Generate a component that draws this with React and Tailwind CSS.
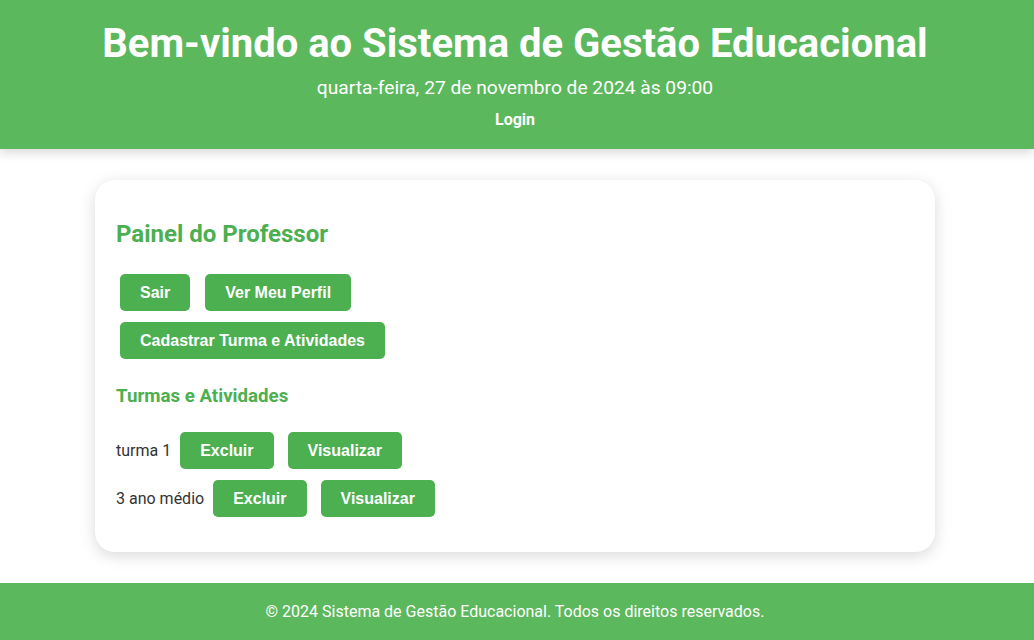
export default function App() {
  const turmas = ["turma 1", "3 ano médio"];
  const btn =
    "bg-[#4caf50] text-white font-bold text-[16px] leading-[17px] px-[20px] py-[10px] rounded-[5px] font-[family-name:Liberation_Sans,Arial,sans-serif]";

  return (
    <div className="min-h-[640px] bg-white font-['Roboto',sans-serif] flex flex-col">
      {/* Header */}
      <header className="bg-[#5cb85c] text-white text-center h-[149px] pt-[20px] pr-[4px] shadow-[0_4px_10px_rgba(0,0,0,0.15)] relative z-10">
        <h1 className="text-[40px] leading-[48px] font-bold">Bem-vindo ao Sistema de Gestão Educacional</h1>
        <p className="text-[19.2px] leading-[24px] mt-[8px]">quarta-feira, 27 de novembro de 2024 às 09:00</p>
        <p className="text-[16px] leading-[20px] font-bold mt-[10px]">Login</p>
      </header>

      {/* Main */}
      <main className="flex-1 flex justify-center pt-[31px] pb-[31px] pr-[4px]">
        <div className="w-[840px] h-[372px] bg-white rounded-[20px] shadow-[0_4px_16px_rgba(0,0,0,0.15)] px-[21px] pt-[39px]">
          <h2 className="text-[24px] leading-[30px] font-bold text-[#4caf50]">Painel do Professor</h2>

          <div className="mt-[25px] flex flex-col gap-[11px] pl-[4px]">
            <div className="flex gap-[15px]">
              <button className={btn}>Sair</button>
              <button className={btn}>Ver Meu Perfil</button>
            </div>
            <div className="flex">
              <button className={btn}>Cadastrar Turma e Atividades</button>
            </div>
          </div>

          <h3 className="text-[18.72px] leading-[24px] font-bold text-[#4caf50] mt-[25px]">Turmas e Atividades</h3>

          <ul className="mt-[24px] flex flex-col gap-[11px]">
            {turmas.map((t) => (
              <li key={t} className="flex items-center text-[16px] text-[#333]">
                <span>{t}</span>
                <button className={btn + " ml-[9px]"}>Excluir</button>
                <button className={btn + " ml-[14px]"}>Visualizar</button>
              </li>
            ))}
          </ul>
        </div>
      </main>

      {/* Footer */}
      <footer className="bg-[#5cb85c] text-white text-center h-[57px] pr-[4px] flex items-center justify-center text-[16px]">
        © 2024 Sistema de Gestão Educacional. Todos os direitos reservados.
      </footer>
    </div>
  );
}
